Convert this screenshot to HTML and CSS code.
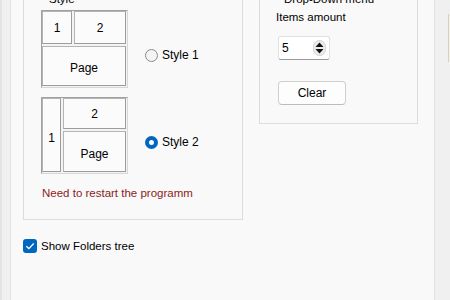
FILE: index.html
```html
<!DOCTYPE html>
<html lang="en">
<head>
    <meta charset="UTF-8">
    <meta name="viewport" content="width=device-width, initial-scale=1.0">
    <title>Settings - Layout</title>
    <link rel="stylesheet" href="styles.css">
</head>
<body>

    <div class="window">
        <div class="panel">
            <div class="top-row">
                <fieldset class="group style-group">
                    <legend>Style</legend>

                    <div class="style-option">
                        <div class="layout layout-one">
                            <div class="pane">1</div>
                            <div class="pane">2</div>
                            <div class="pane pane-page">Page</div>
                        </div>
                        <label class="radio">
                            <input type="radio" name="style" value="1">
                            <span class="radio-mark"></span>
                            Style 1
                        </label>
                    </div>

                    <div class="style-option">
                        <div class="layout layout-two">
                            <div class="pane pane-side">1</div>
                            <div class="pane">2</div>
                            <div class="pane pane-page">Page</div>
                        </div>
                        <label class="radio">
                            <input type="radio" name="style" value="2" checked>
                            <span class="radio-mark"></span>
                            Style 2
                        </label>
                    </div>

                    <p class="warning">Need to restart the programm</p>
                </fieldset>

                <fieldset class="group menu-group">
                    <legend>Drop-Down menu</legend>
                    <div class="field-label">Items amount</div>
                    <div class="spin">
                        <span class="spin-value">5</span>
                        <svg class="spin-arrows" width="13" height="16" viewBox="0 0 13 16">
                            <rect x="0.5" y="0.5" width="12" height="15" rx="6" fill="#ececec" stroke="#d2d2d2"/>
                            <path d="M2.5 7 L6.5 2.5 L10.5 7 Z" fill="#111"/>
                            <path d="M2.5 9 L6.5 13.5 L10.5 9 Z" fill="#111"/>
                        </svg>
                    </div>
                    <button class="btn">Clear</button>
                </fieldset>
            </div>

            <label class="check">
                <span class="check-box">
                    <svg width="12" height="12" viewBox="0 0 12 12">
                        <path d="M2.3 6.2 L4.9 8.6 L9.7 3.5" fill="none" stroke="#fff" stroke-width="1.3"/>
                    </svg>
                </span>
                Show Folders tree
            </label>
        </div>

        <div class="edge">
            <div class="edge-line"></div>
        </div>
    </div>

</body>
</html>
```

FILE: styles.css
```css
body {
    margin: 0;
    background-color: #f0f0f0;
    font-family: "Liberation Sans", Arial, sans-serif;
    font-size: 11.5px;
    color: #000;
    overflow: hidden;
}

.window {
    display: flex;
    height: 300px;
    padding-left: 10px;
    border-left: 2px solid #e3e3e3;
    box-sizing: border-box;
}

.panel {
    width: 426px;
    height: 300px;
    box-sizing: border-box;
    margin-left: -2px;
    border-left: 1px solid #e2e2e2;
    border-right: 1px solid #e2e2e2;
    background-color: #f9f9f9;
}

.top-row {
    display: flex;
    align-items: flex-start;
    gap: 16px;
    padding-left: 12px;
    margin-top: -9px;
}

.group {
    margin: 0;
    min-width: 0;
    border: 1px solid #dcdcdc;
    box-sizing: border-box;
}

.group legend {
    margin-left: 6px;
    padding: 0 2px;
    line-height: 16px;
}

.style-group {
    width: 220px;
    padding: 3px 0 18px 17px;
}

.menu-group {
    width: 159px;
    padding: 2px 0 18px 16px;
}

/* layout previews */

.style-option {
    display: flex;
    align-items: flex-start;
}

.style-option + .style-option {
    margin-top: 9px;
}

.layout {
    display: grid;
    gap: 2px;
    padding: 0 1px 1px 0;
    border-top: 1px solid #a0a0a0;
    border-left: 1px solid #a0a0a0;
    border-right: 1px solid #d8d8d8;
    border-bottom: 1px solid #d8d8d8;
    background-color: #f3f3f3;
}

.layout-one {
    grid-template-columns: 30px 52px;
    grid-template-rows: 33px 40px;
}

.layout-two {
    grid-template-columns: 19px 63px;
    grid-template-rows: 31px 41px;
}

.layout-one .pane-page {
    grid-column: 1 / 3;
}

.layout-two .pane-side {
    grid-row: 1 / 3;
}

.pane {
    display: flex;
    align-items: center;
    justify-content: center;
    border: 1px solid;
    border-color: #b4b4b4 #9c9c9c #9c9c9c #b4b4b4;
    background-color: #fbfbfb;
    font-size: 12px;
}

.pane-page {
    padding-top: 4px;
}

.pane-side {
    padding-top: 6px;
}

.radio {
    display: flex;
    align-items: center;
    gap: 4px;
    height: 16px;
    margin: 37px 0 0 17px;
    font-size: 12px;
}

.radio input {
    display: none;
}

.radio-mark {
    width: 13px;
    height: 13px;
    box-sizing: border-box;
    border: 1px solid #8a8a8a;
    border-radius: 50%;
    background-color: #f4f4f4;
}

.radio input:checked + .radio-mark {
    border: 4px solid #0067c0;
    background-color: #fff;
}

.warning {
    margin: 11px 0 0 1px;
    line-height: 16px;
    color: #8c1c1c;
}

/* drop-down menu settings */

.field-label {
    line-height: 16px;
}

.spin {
    display: flex;
    align-items: center;
    justify-content: space-between;
    width: 52px;
    height: 24px;
    box-sizing: border-box;
    margin: 11px 0 0 2px;
    padding: 0 3px 0 3px;
    border: 1px solid #e0e0e0;
    border-bottom-color: #9a9a9a;
    border-radius: 3px;
    background-color: #fff;
    font-size: 12px;
}

.btn {
    display: block;
    width: 68px;
    height: 24px;
    margin: 21px 0 0 2px;
    padding: 0;
    border: 1px solid #d0d0d0;
    border-bottom-color: #bcbcbc;
    border-radius: 4px;
    background-color: #fdfdfd;
    font-family: inherit;
    font-size: 12px;
    color: #000;
}

.check {
    display: flex;
    align-items: center;
    gap: 4px;
    height: 16px;
    margin-top: 18px;
    padding-left: 12px;
}

.check-box {
    display: flex;
    align-items: center;
    justify-content: center;
    width: 14px;
    height: 14px;
    border-radius: 3px;
    background-color: #0067c0;
}

.edge {
    display: flex;
    justify-content: flex-end;
    width: 14px;
    padding-right: 1px;
}

.edge-line {
    width: 1px;
    height: 48px;
    margin-top: 14px;
    background-color: #d9d1b8;
}
```
